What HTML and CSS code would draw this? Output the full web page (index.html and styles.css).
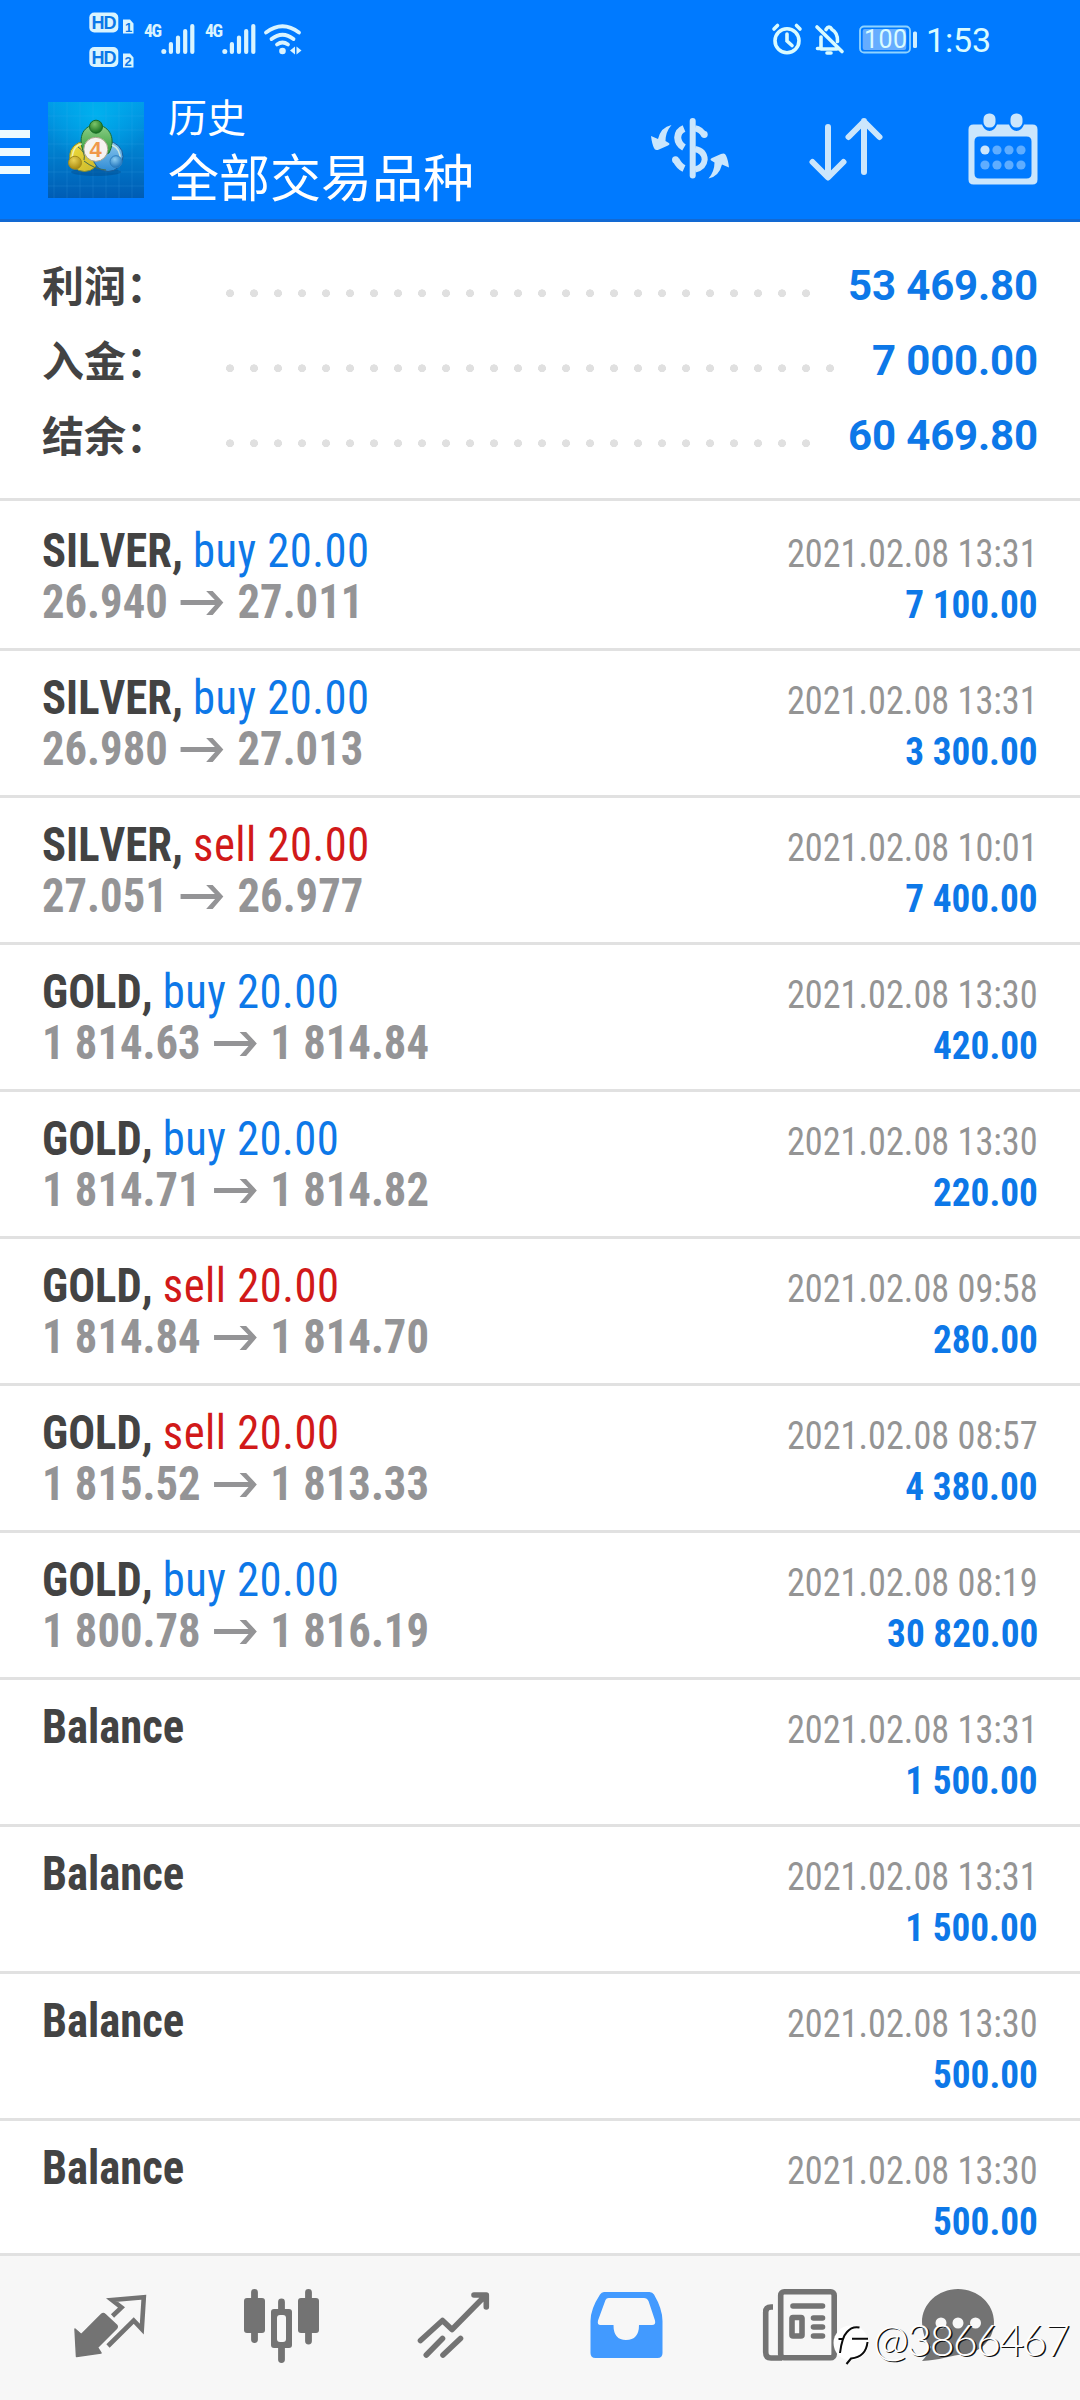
FILE: index.html
```
<!DOCTYPE html>
<html lang="zh-CN">
<head>
<meta charset="utf-8">
<title>历史</title>
<link rel="stylesheet" href="styles.css">
</head>
<body>
<svg class="defs" width="0" height="0" aria-hidden="true">
  <symbol id="arrow" viewBox="0 0 46 26">
    <path d="M0 12.5H43" stroke-width="5.2"/>
    <path d="M27.500 1H34.500L46 12.500L34.500 25H27.500L39.500 12.500Z" stroke="none" fill="#949496"/>
  </symbol>
</svg>
<div class="screen">
  <header class="header">
    <div class="status">
      <svg class="status-left" width="225" height="66" viewBox="85 6 225 66">
        <g fill="#d9f4ff">
          <rect x="89.300" y="12.500" width="29" height="20" rx="5"/>
          <rect x="89.300" y="47" width="29" height="20" rx="5"/>
          <path d="M123 19.500h7l3.500 4v10h-10.500zM123 53.500h7l3.500 4v10h-10.500z"/>
          <circle cx="163.800" cy="51.500" r="2.500"/>
          <circle cx="224.800" cy="51.500" r="2.500"/>
          <circle cx="282.500" cy="51" r="3.300"/>
          <path d="M290 50.500l5-4v8zM301.500 50.500l-5-4v8z"/>
        </g>
        <g stroke="#d9f4ff" stroke-width="4.200" stroke-linecap="round" fill="none">
          <path d="M170.900 44V52M178 37.500V52M185.200 31V52M192.300 26V52"/>
          <path d="M231.900 44V52M239 37.500V52M246.200 31V52M253.300 26V52"/>
          <path d="M266 32.500Q282.500 20 299 32.500M271.500 39Q282.500 30.500 293.500 39M277 44.500Q282.500 40.500 288 44.500" stroke-width="3.800"/>
        </g>
        <g class="hd" fill="#0a78e8">
          <text x="91.500" y="29" textLength="25">HD</text>
          <text x="91.500" y="63.500" textLength="25">HD</text>
          <text class="sim" x="125" y="32">1</text>
          <text class="sim" x="124.500" y="66">2</text>
        </g>
        <g class="net" fill="#d9f4ff">
          <text x="144" y="37.300" textLength="18">4G</text>
          <text x="205" y="37.300" textLength="18">4G</text>
        </g>
      </svg>
      <svg class="status-right" width="230" height="40" viewBox="765 20 230 40">
        <g fill="none" stroke="#d9fbff" stroke-width="3.600" stroke-linecap="round">
          <circle cx="787" cy="40.700" r="12"/>
          <path d="M787 34v7l5 4.500M774 29l3.500-3.500M800 29l-3.500-3.500"/>
          <path d="M821 37V48.500H817.500M821 49H837M826 29.500Q829 24.500 832 29.500Q838 33 837.500 41.500M817 27L842 51.500"/>
          <path d="M827 53h4"/>
        </g>
        <rect x="860" y="26.500" width="50" height="26" rx="4" fill="none" stroke="#8fd3ff" stroke-width="1.800"/>
        <rect x="862.700" y="29" width="43.500" height="21" rx="2" fill="#66adff"/>
        <rect x="913" y="31.500" width="4" height="16.500" rx="1.500" fill="#cfeeff"/>
        <text class="battery" x="864" y="48.300" textLength="43" fill="#d9fbff">100</text>
        <text class="clock" x="926" y="52.300" textLength="65" fill="#d9fbff">1:53</text>
      </svg>
    </div>
    <div class="appbar">
      <svg class="menu" width="30" height="45" viewBox="0 0 30 45"><path d="M0 4H30M0 22H30M0 40H30" stroke="#ecfaff" stroke-width="8"/></svg>
      <svg class="logo" width="96" height="96" viewBox="0 0 96 96">
        <defs>
          <linearGradient id="sky" x1="0" y1="0" x2="0" y2="1"><stop offset="0" stop-color="#009be8"/><stop offset=".5" stop-color="#0080cf"/><stop offset="1" stop-color="#005cb4"/></linearGradient>
          <radialGradient id="glow" cx=".5" cy=".12" r=".55"><stop offset="0" stop-color="#00b4f0" stop-opacity=".9"/><stop offset="1" stop-color="#00b4f0" stop-opacity="0"/></radialGradient>
          <linearGradient id="gr" x1="0" y1="0" x2="0" y2="1"><stop offset="0" stop-color="#8fd08a"/><stop offset="1" stop-color="#2f9a35"/></linearGradient>
          <linearGradient id="ye" x1="0" y1="0" x2="1" y2="1"><stop offset="0" stop-color="#f2df3c"/><stop offset="1" stop-color="#c9b52b"/></linearGradient>
          <linearGradient id="bl" x1="0" y1="0" x2="0" y2="1"><stop offset="0" stop-color="#8cc8ee"/><stop offset="1" stop-color="#2d8ad4"/></linearGradient>
          <radialGradient id="gh" cx=".4" cy=".3" r=".7"><stop offset="0" stop-color="#7cc46a"/><stop offset="1" stop-color="#15701f"/></radialGradient>
          <radialGradient id="yh" cx=".4" cy=".3" r=".7"><stop offset="0" stop-color="#ead255"/><stop offset="1" stop-color="#a88a10"/></radialGradient>
          <radialGradient id="bh" cx=".4" cy=".3" r=".7"><stop offset="0" stop-color="#8ccdf2"/><stop offset="1" stop-color="#1f74bd"/></radialGradient>
        </defs>
        <rect width="96" height="96" fill="url(#sky)"/>
        <rect width="96" height="96" fill="url(#glow)"/>
        <path d="M6 0V96M19 0V96M32 0V96M45 0V96M58 0V96M71 0V96M84 0V96M0 14H96M0 28H96M0 42H96M0 56H96M0 70H96M0 84H96" stroke="#4ab4ee" stroke-opacity=".16" fill="none"/>
        <ellipse cx="48" cy="70" rx="25" ry="4" fill="#003f7a" opacity=".35"/>
        <g stroke-width="1">
          <circle cx="36.500" cy="54.500" r="15" fill="url(#ye)" stroke="#7d8a3a"/>
          <circle cx="60" cy="54.500" r="15" fill="url(#bl)" stroke="#1a5c98"/>
          <path d="M36 51C30 38 33 24 48 22.500C63 24 68 38 61 51C56 54 40 54 36 51Z" fill="url(#gr)" stroke="#1a6b34"/>
          <path d="M24 57Q25 43 34 42M64 43Q73 47 72 58" stroke="#f4fbe0" stroke-opacity=".7" fill="none" stroke-width="1.500"/>
          <path d="M36 59Q46 67 58 68M30 45Q38 50 36 58" stroke="#456b50" fill="none"/>
          <circle cx="48" cy="24.700" r="6.500" fill="url(#gh)" stroke="#176a26"/>
          <circle cx="27" cy="60.700" r="6.500" fill="url(#yh)" stroke="#a38a1c"/>
          <circle cx="68" cy="59.700" r="6" fill="url(#bh)" stroke="#2f80c0"/>
        </g>
        <circle cx="47.800" cy="47.300" r="12" fill="#f6f3f1" stroke="#a9a58c"/>
        <text class="four" x="41.500" y="55">4</text>
      </svg>
      <div class="titles">
        <div class="sub">历史</div>
        <div class="main">全部交易品种</div>
      </div>
      <svg class="act-dollar" width="79" height="62" viewBox="650 117 79 62" fill="#cbe6fc">
        <path d="M692.700 121V175.500" stroke="#cbe6fc" stroke-width="6" stroke-linecap="round"/>
        <g fill="none" stroke="#cbe6fc" stroke-width="7">
          <path d="M684 128.500Q678 131 677.700 137.500Q678 144 684 147.500"/>
          <path d="M684 168.500Q679.500 166.500 676 160"/>
          <path d="M695 128.200Q701 129.500 704 135" stroke-width="6"/>
          <path d="M695 149Q704.500 151 704.700 159.500Q704 167.500 695 169.500" stroke-width="6"/>
        </g>
        <circle cx="675.500" cy="159.700" r="3.500"/><circle cx="704.300" cy="134.500" r="3.400"/>
        <path id="swirl" d="M671.500 125Q661 127 658 139L651 136Q652 144 654 148Q655 151 659 149.500L668 145.500Q671 144 668 142.500L665.500 141Q665.500 132 671.500 125Z"/>
        <use href="#swirl" transform="rotate(180 690 151.700)"/>
      </svg>
      <svg class="act-sort" width="75" height="66" viewBox="809 117 75 66" fill="none" stroke="#cbe6fc" stroke-width="6" stroke-linecap="round" stroke-linejoin="round">
        <path d="M828 127V177M812.500 162L828 177.500L843.500 162M864 172V121M848.500 137L864 121.500L879.500 137"/>
      </svg>
      <svg class="act-cal" width="70" height="72" viewBox="967.500 112.500 70 72">
        <path d="M973 124H981.500Q984 130.500 989 130.500Q994 130.500 996.500 124H1008.500Q1011 130.500 1016 130.500Q1021 130.500 1023.500 124H1032Q1037 124 1037 129V179Q1037 184 1032 184H973Q968 184 968 179V129Q968 124 973 124ZM979 136Q974 136 974 141V173Q974 178 979 178H1026Q1031 178 1031 173V141Q1031 136 1026 136Z" fill="#cbe6fc" fill-rule="evenodd"/>
        <rect x="983" y="113" width="12" height="14" rx="5.500" fill="#cbe6fc"/><rect x="1010" y="113" width="12" height="14" rx="5.500" fill="#cbe6fc"/>
        <circle cx="984.500" cy="149.500" r="4.600" fill="#cbe6fc"/>
        <g fill="#5fadff"><circle cx="996.500" cy="149.500" r="4.600"/><circle cx="1008.500" cy="149.500" r="4.600"/><circle cx="1020.500" cy="149.500" r="4.600"/><circle cx="984.500" cy="164.500" r="4.600"/><circle cx="996.500" cy="164.500" r="4.600"/><circle cx="1008.500" cy="164.500" r="4.600"/><circle cx="1020.500" cy="164.500" r="4.600"/></g>
      </svg>
    </div>
  </header>

  <section class="summary">
    <div class="total"><span class="label">利润：</span><i class="dots"></i><b class="sum">53 469.80</b></div>
    <div class="total"><span class="label">入金：</span><i class="dots"></i><b class="sum">7 000.00</b></div>
    <div class="total"><span class="label">结余：</span><i class="dots"></i><b class="sum">60 469.80</b></div>
  </section>

  <main class="deals">
    <article class="deal">
      <div class="line"><span class="name"><b>SILVER,</b> <span class="buy">buy 20.00</span></span><time>2021.02.08 13:31</time></div>
      <div class="line"><span class="price">26.940<svg class="to"><use href="#arrow"/></svg>27.011</span><b class="profit">7 100.00</b></div>
    </article>
    <article class="deal">
      <div class="line"><span class="name"><b>SILVER,</b> <span class="buy">buy 20.00</span></span><time>2021.02.08 13:31</time></div>
      <div class="line"><span class="price">26.980<svg class="to"><use href="#arrow"/></svg>27.013</span><b class="profit">3 300.00</b></div>
    </article>
    <article class="deal">
      <div class="line"><span class="name"><b>SILVER,</b> <span class="sell">sell 20.00</span></span><time>2021.02.08 10:01</time></div>
      <div class="line"><span class="price">27.051<svg class="to"><use href="#arrow"/></svg>26.977</span><b class="profit">7 400.00</b></div>
    </article>
    <article class="deal">
      <div class="line"><span class="name"><b>GOLD,</b> <span class="buy">buy 20.00</span></span><time>2021.02.08 13:30</time></div>
      <div class="line"><span class="price">1 814.63<svg class="to"><use href="#arrow"/></svg>1 814.84</span><b class="profit">420.00</b></div>
    </article>
    <article class="deal">
      <div class="line"><span class="name"><b>GOLD,</b> <span class="buy">buy 20.00</span></span><time>2021.02.08 13:30</time></div>
      <div class="line"><span class="price">1 814.71<svg class="to"><use href="#arrow"/></svg>1 814.82</span><b class="profit">220.00</b></div>
    </article>
    <article class="deal">
      <div class="line"><span class="name"><b>GOLD,</b> <span class="sell">sell 20.00</span></span><time>2021.02.08 09:58</time></div>
      <div class="line"><span class="price">1 814.84<svg class="to"><use href="#arrow"/></svg>1 814.70</span><b class="profit">280.00</b></div>
    </article>
    <article class="deal">
      <div class="line"><span class="name"><b>GOLD,</b> <span class="sell">sell 20.00</span></span><time>2021.02.08 08:57</time></div>
      <div class="line"><span class="price">1 815.52<svg class="to"><use href="#arrow"/></svg>1 813.33</span><b class="profit">4 380.00</b></div>
    </article>
    <article class="deal">
      <div class="line"><span class="name"><b>GOLD,</b> <span class="buy">buy 20.00</span></span><time>2021.02.08 08:19</time></div>
      <div class="line"><span class="price">1 800.78<svg class="to"><use href="#arrow"/></svg>1 816.19</span><b class="profit">30 820.00</b></div>
    </article>
    <article class="deal">
      <div class="line"><span class="name"><b>Balance</b></span><time>2021.02.08 13:31</time></div>
      <div class="line"><b class="profit">1 500.00</b></div>
    </article>
    <article class="deal">
      <div class="line"><span class="name"><b>Balance</b></span><time>2021.02.08 13:31</time></div>
      <div class="line"><b class="profit">1 500.00</b></div>
    </article>
    <article class="deal">
      <div class="line"><span class="name"><b>Balance</b></span><time>2021.02.08 13:30</time></div>
      <div class="line"><b class="profit">500.00</b></div>
    </article>
    <article class="deal">
      <div class="line"><span class="name"><b>Balance</b></span><time>2021.02.08 13:30</time></div>
      <div class="line"><b class="profit">500.00</b></div>
    </article>
  </main>

  <nav class="tabs">
    <svg width="80" height="80" viewBox="70 2286 80 80" fill="none" stroke="#737373" stroke-width="4.600" stroke-linejoin="round">
      <path d="M75 2329L81.300 2334.500L101.500 2314.300Q103.300 2312.500 105 2314.300L116.500 2325Q118 2326.700 116.500 2328.500L97.500 2347.500L101 2353L76.500 2356.500Z" fill="#737373" stroke-width="1.500"/>
      <path d="M112.500 2316L121.500 2307.500L112 2300L143.800 2297.300L141.800 2329L133.700 2320.500L108 2346" stroke-linejoin="miter"/>
    </svg>
    <svg width="80" height="80" viewBox="243 2286 80 80" fill="#737373">
      <path d="M254.500 2292.500V2339.500M281.500 2302V2359.500M308.500 2292.500V2341" stroke="#737373" stroke-width="6.800" stroke-linecap="round"/>
      <rect x="244" y="2298" width="21" height="35" rx="3"/><rect x="298" y="2298" width="21" height="35" rx="3"/>
      <rect x="271" y="2309" width="21" height="39" rx="3"/><rect x="277" y="2315" width="9" height="27" rx="3" fill="#f7f7f7"/>
    </svg>
    <svg width="80" height="80" viewBox="416 2286 80 80" fill="none" stroke="#737373" stroke-width="5.600" stroke-linecap="round" stroke-linejoin="round">
      <path d="M420.500 2340.500L442.500 2320.500L452 2329.500L485 2296M474 2295H486.300V2307M426.300 2355L442.500 2338.500"/><path d="M443 2355L460.500 2338.500"/>
    </svg>
    <svg width="80" height="80" viewBox="589 2286 80 80">
      <path d="M604 2292H649.500Q652.500 2292 654 2294.500Q662.500 2309 662.500 2321V2353Q662.500 2358 657.500 2358H595.500Q590.500 2358 590.500 2353V2321Q590.500 2309 600 2294.500Q601.500 2292 604 2292ZM608.500 2298Q606.500 2298 605.500 2300L598 2320.500Q597 2325 600.500 2325H613.500Q613.500 2340 626 2340Q639 2340 639 2325H652Q656 2325 655 2320.500L648.500 2301Q647 2298 644 2298Z" fill="#429aff" fill-rule="evenodd"/>
    </svg>
    <svg width="80" height="80" viewBox="762 2286 80 80" fill="none" stroke="#737373" stroke-width="5.600" stroke-linecap="round">
      <rect x="780.700" y="2291.800" width="53.500" height="66" rx="3.500"/>
      <path d="M773 2307H771Q765.700 2307 765.700 2312V2352Q765.700 2358 771 2358H782" stroke-linecap="butt"/>
      <path d="M793 2306H822.500M813.500 2318H822.500M813.500 2327H822.500M813.500 2336H822.500"/>
      <rect x="792" y="2317.500" width="10" height="18.500" rx="1"/>
    </svg>
    <svg class="chat" width="80" height="80" viewBox="918 2286 80 80">
      <path d="M958 2289C978 2289 994 2304 994 2322C994 2341 978 2355 958 2355C950 2356 940 2360 922 2361Q927 2356 931 2347Q922 2337 922 2322C922 2304 938 2289 958 2289Z" fill="#737373"/>
      <g fill="#f7f7f7"><circle cx="941" cy="2323" r="5.500"/><circle cx="958" cy="2323" r="5.500"/><circle cx="975.500" cy="2323" r="5.500"/></g>
    </svg>
  </nav>

  <svg class="watermark" width="250" height="60" viewBox="830 2315 250 60">
    <circle cx="851" cy="2343" r="17.500" fill="#fff"/>
    <path d="M840 2353Q842 2337 847 2332Q852 2326 859.500 2327.500M838.500 2339H843M852 2338.800H868M867.500 2342Q866 2357 851 2358.500L846.500 2364" stroke="#0b0b0b" stroke-width="2" fill="none"/>
    <text x="873" y="2355.500" textLength="197">@3866467</text>
  </svg>
</div>
</body>
</html>
```
FILE: styles.css
```
* { box-sizing: border-box; }
body { margin: 0; background: #fff; font-family: Roboto, "Noto Sans CJK SC", sans-serif; }
svg { display: block; flex: none; }
.defs { position: absolute; }
.screen {
  position: relative;
  display: flex;
  flex-direction: column;
  width: 1080px;
  height: 2400px;
  overflow: hidden;
}

/* Header */
.header {
  height: 222px;
  background: #007aff;
  border-bottom: 3px solid #1269d3;
}
.status {
  display: flex;
  justify-content: space-between;
  height: 80px;
  padding: 6px 85px 0 85px;
}
.status-right { margin-top: 14px; }
.hd { font: 700 18px "Liberation Sans", sans-serif; }
.hd .sim { font-size: 13px; }
.net { font: 700 18px "Roboto Condensed", Roboto, sans-serif; }
.battery { font: 400 25px Roboto, sans-serif; }
.clock { font: 400 34px Roboto, sans-serif; }
.four { font: 700 22px "Liberation Sans", sans-serif; fill: #f0984a; }
.appbar { display: flex; height: 139px; }
.menu { margin-top: 50px; }
.logo { margin: 22px 0 0 18px; }
.titles { width: 480px; padding: 7.5px 0 0 24px; color: #fff; font-family: "Noto Sans CJK SC", sans-serif; }
.sub { font-size: 39px; line-height: 55px; }
.main { font-size: 51px; line-height: 64px; }
.act-dollar { margin: 37px 0 0 26px; }
.act-sort { margin: 37px 0 0 80px; }
.act-cal { margin: 32.5px 0 0 83.5px; }

/* Totals */
.summary {
  height: 279px;
  padding: 26px 42px 0;
  border-bottom: 3px solid #e1e1e1;
}
.total { display: flex; height: 75px; font-size: 42px; line-height: 75px; }
.label { width: 176px; margin-top: -2.5px; color: #434343; font-family: "Noto Sans CJK SC", sans-serif; font-weight: 700; }
.dots {
  flex: 1;
  margin-right: 27px;
  background: radial-gradient(circle 4.2px at 12px 45.3px, #e0e0e0 3.7px, transparent 4.2px) repeat-x 0 0 / 24px 75px;
}
.sum { color: #0d78e8; letter-spacing: -.15px; }

/* Deals */
.deals { flex: 1; min-height: 0; overflow: hidden; padding-top: 3px; font-family: "Roboto Condensed", Roboto, sans-serif; }
.deal { height: 147px; padding: 21px 42px 0; border-bottom: 3px solid #e1e1e1; }
.line { display: flex; align-items: baseline; height: 51px; line-height: 51px; }
.line::before { content: "\200b"; width: 0; font-size: 48px; }
.name, .price { font-size: 48px; transform: scaleX(.93); transform-origin: left; white-space: pre; }
.name { color: #434343; font-kerning: none; }
.price { font-weight: 700; color: #949496; }
.buy, .sell { letter-spacing: .5px; }
.buy { color: #0d78e8; }
.sell { color: #d11919; }
.to { display: inline-block; width: 48px; height: 26px; margin: 0 14px 0 13px; stroke: #949496; vertical-align: 2px; }
time, .profit { margin-left: auto; font-size: 39px; transform-origin: right; }
time { color: #949494; transform: scaleX(.93); }
.profit { color: #0d78e8; transform: scaleX(.955); }

/* Bottom tabs */
.tabs {
  display: flex;
  gap: 93px;
  height: 147px;
  padding: 30px 0 0 70px;
  background: #f7f7f7;
  border-top: 3px solid #e1e1e1;
}
.chat { margin-left: -17px; }
.watermark { position: absolute; left: 830px; top: 2315px; }
.watermark text { font: 300 43px Lato, sans-serif; fill: #fff; text-shadow: 1.5px 1.5px 0 #111; }
```
